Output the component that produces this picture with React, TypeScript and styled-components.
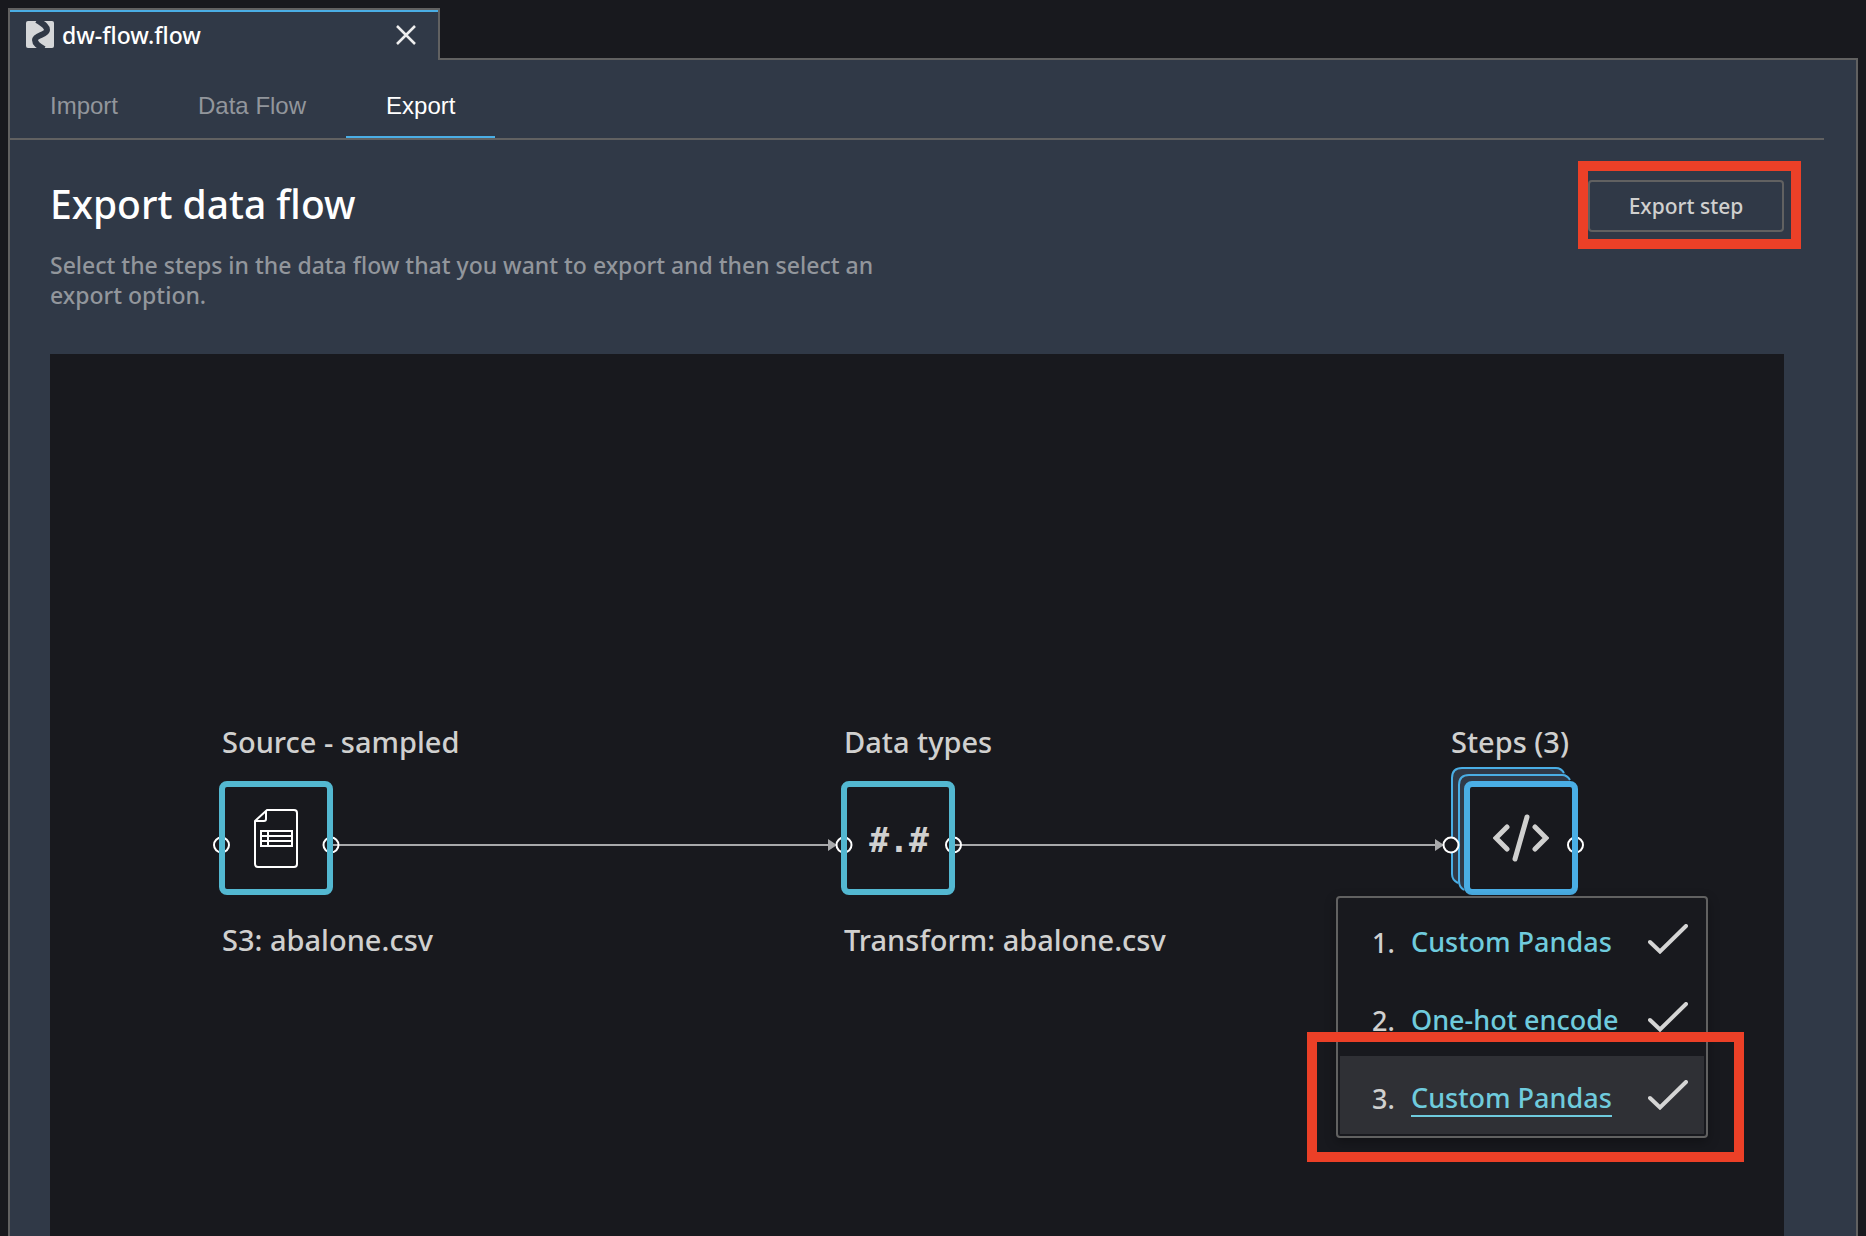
import React from "react";
import styled, { createGlobalStyle } from "styled-components";

const sans = `"Noto Sans", "Open Sans", sans-serif`;

const GlobalStyle = createGlobalStyle`
  * { box-sizing: border-box; }
  body { margin: 0; background: #18191e; font-family: ${sans}; font-weight: 500; color: #d0d0cf; }
  button { font: inherit; color: inherit; background: none; border: 0; padding: 0; cursor: pointer; }
  h1, p, ol { margin: 0; padding: 0; }
`;

const Page = styled.div`
  min-height: 100vh;
  display: flex;
  flex-direction: column;
  padding: 8px 8px 0;
`;

const FileTab = styled.div`
  width: 432px;
  height: 52px;
  margin-bottom: -2px;
  position: relative;
  z-index: 1;
  display: flex;
  align-items: center;
  gap: 8px;
  padding: 4px 22px 4px 16px;
  background: #303947;
  border: 2px solid #616161;
  border-bottom: 0;
  box-shadow: inset 0 2px 0 #4aaee5;
`;

const FileName = styled.span`
  flex: 1;
  font-size: 23px;
  line-height: 32px;
  color: #ffffff;
`;

const CloseButton = styled.button`
  display: flex;
`;

const Panel = styled.main`
  flex: 1;
  display: flex;
  flex-direction: column;
  background: #303947;
  border: 2px solid #616161;
  border-bottom: 0;
`;

const SubTabs = styled.nav`
  display: flex;
  height: 80px;
  margin-right: 32px;
  border-bottom: 2px solid #616161;
`;

const SubTab = styled.button<{ $active?: boolean }>`
  padding: 16px 40px 0;
  border-bottom: 2px solid ${(p) => (p.$active ? "#4aaee5" : "transparent")};
  font: 24px "Liberation Sans", Arial, sans-serif;
  color: ${(p) => (p.$active ? "#ffffff" : "#92969c")};
`;

const Header = styled.header`
  display: flex;
  justify-content: space-between;
  align-items: flex-start;
  padding: 40px 72px 44px 40px;
`;

const Heading = styled.div`
  max-width: 840px;
`;

const Title = styled.h1`
  font-size: 39px;
  line-height: 48px;
  font-weight: 500;
  color: #ffffff;
`;

const Description = styled.p`
  margin-top: 22px;
  font-size: 23px;
  line-height: 30px;
  color: #92969c;
`;

const Anchor = styled.div`
  position: relative;
`;

const ExportButton = styled.button`
  height: 52px;
  width: 196px;
  border: 2px solid #616161;
  border-radius: 4px;
  font-size: 21px;
`;

const Highlight = styled.div<{ $inset: string }>`
  position: absolute;
  inset: ${(p) => p.$inset};
  border: 10px solid #ec4027;
  pointer-events: none;
`;

const Canvas = styled.section`
  position: relative;
  flex: 1;
  min-height: 882px;
  margin: 0 72px 0 40px;
  background: #18191e;
  overflow: hidden;
`;

const Edges = styled.svg`
  position: absolute;
  inset: 0;
`;

const Node = styled.div<{ $x: number }>`
  position: absolute;
  left: ${(p) => p.$x}px;
  top: 367px;
`;

const NodeTitle = styled.div`
  font-size: 29px;
  line-height: 42px;
  white-space: nowrap;
`;

const NodeCaption = styled(NodeTitle)`
  margin-top: 24px;
`;

const NodeBox = styled.button<{ $color: string; $shift?: number }>`
  display: flex;
  align-items: center;
  justify-content: center;
  width: 114px;
  height: 114px;
  margin: 18px 0 0 ${(p) => p.$shift ?? -3}px;
  border: 6px solid ${(p) => p.$color};
  border-radius: 8px;
`;

const TypeGlyph = styled.span`
  padding: 4px 0 0 2px;
  font: bold 33px "DejaVu Sans Mono", monospace;
`;

const Menu = styled.div`
  position: absolute;
  left: 1286px;
  top: 542px;
  width: 372px;
  padding: 2px;
  border: 2px solid #616161;
  border-radius: 4px;
  background: #18191e;
  box-shadow: 0 4px 12px rgba(0, 0, 0, 0.3);
`;

const MenuList = styled.ol`
  list-style: none;
`;

const MenuItem = styled.li<{ $active?: boolean }>`
  display: flex;
  align-items: center;
  height: 78px;
  padding: 8px 16px 0 32px;
  font-size: 27px;
  line-height: 34px;
  background: ${(p) => (p.$active ? "#2f3035" : "transparent")};
`;

const MenuNumber = styled.span`
  width: 39px;
`;

const MenuLink = styled.a<{ $active?: boolean }>`
  color: #6fcbdd;
  text-decoration: none;
  border-bottom: 2px solid ${(p) => (p.$active ? "#6fcbdd" : "transparent")};
`;

const MenuCheck = styled.svg`
  margin: 0 0 8px auto;
`;

const FlowLogo = () => (
  <svg width="28" height="28" viewBox="0 0 28 28" aria-hidden="true">
    <rect width="28" height="27" rx="2" fill="#d5d7d9" />
    <path
      d="M11 -1C17 3 21 5 21 9C21 14 9 14 9 19C9 23 13 25 18 28"
      fill="none"
      stroke="#303947"
      strokeWidth="6"
    />
  </svg>
);

const FileIcon = () => (
  <svg width="44" height="60" viewBox="0 0 44 60" fill="none" stroke="#ffffff" strokeWidth="2" aria-hidden="true">
    <path d="M13 2H40Q43 2 43 5V56Q43 59 40 59H4Q1 59 1 56V13Z" strokeLinejoin="round" />
    <path d="M12 3V11Q12 13 10 13H2" />
    <path d="M7 23H38V38H7ZM7 28H38M7 33H38M14 23V38" />
  </svg>
);

const CodeIcon = () => (
  <svg width="56" height="48" viewBox="0 0 56 48" fill="none" stroke="#d0d0cf" strokeWidth="5" strokeLinecap="round" aria-hidden="true">
    <path d="M14 13L3 24L14 35M42 13L53 24L42 35" />
    <path d="M34 3L22 45" />
  </svg>
);

const steps = [
  { name: "Custom Pandas", active: false },
  { name: "One-hot encode", active: false },
  { name: "Custom Pandas", active: true },
];

export default function App() {
  return (
    <>
      <GlobalStyle />
      <Page>
        <FileTab>
          <FlowLogo />
          <FileName>dw-flow.flow</FileName>
          <CloseButton aria-label="Close tab">
            <svg width="20" height="20" viewBox="0 0 20 20" stroke="#eeeeee" strokeWidth="2.5">
              <path d="M1 1L19 19M19 1L1 19" />
            </svg>
          </CloseButton>
        </FileTab>
        <Panel>
          <SubTabs>
            <SubTab>Import</SubTab>
            <SubTab>Data Flow</SubTab>
            <SubTab $active>Export</SubTab>
          </SubTabs>
          <Header>
            <Heading>
              <Title>Export data flow</Title>
              <Description>
                Select the steps in the data flow that you want to export and then select an export option.
              </Description>
            </Heading>
            <Anchor>
              <ExportButton>Export step</ExportButton>
              <Highlight $inset="-19px -17px -17px -10px" />
            </Anchor>
          </Header>
          <Canvas>
            <Edges width="1734" height="882" fill="none" stroke="#ffffff" strokeWidth="2">
              <path d="M1402 522V424Q1402 414 1412 414H1508L1516 420V530H1408Z" fill="#303947" stroke="none" />
              <path d="M1408 529Q1402 526 1402 520V424Q1402 414 1412 414H1506Q1511 414 1514 419" stroke="#4aaee5" />
              <path d="M1409 530V431Q1409 421 1419 421H1515L1523 430V537H1414Z" fill="#303947" stroke="none" />
              <path d="M1414 536Q1409 533 1409 527V431Q1409 421 1419 421H1512Q1517 421 1520 426" stroke="#4aaee5" />
              <rect x="1416" y="429" width="110" height="110" rx="6" fill="#18191e" stroke="none" />
              <g stroke="#a8a9ab">
                <path d="M281 491H780M903 491H1388" />
                <path d="M778 485V497L787 491ZM1385 485V497L1394 491Z" fill="#a8a9ab" stroke="none" />
              </g>
              <circle cx="171.5" cy="491" r="7.5" />
              <circle cx="281" cy="491" r="7.5" />
              <circle cx="794" cy="491" r="7.5" />
              <circle cx="903.5" cy="491" r="7.5" />
              <circle cx="1401" cy="491" r="7.5" fill="#18191e" />
              <circle cx="1525.5" cy="491" r="7.5" />
            </Edges>
            <Node $x={172}>
              <NodeTitle>Source - sampled</NodeTitle>
              <NodeBox $color="#53b8d1" aria-label="Source">
                <FileIcon />
              </NodeBox>
              <NodeCaption>S3: abalone.csv</NodeCaption>
            </Node>
            <Node $x={794}>
              <NodeTitle>Data types</NodeTitle>
              <NodeBox $color="#53b8d1">
                <TypeGlyph>#.#</TypeGlyph>
              </NodeBox>
              <NodeCaption>Transform: abalone.csv</NodeCaption>
            </Node>
            <Node $x={1401}>
              <NodeTitle>Steps (3)</NodeTitle>
              <NodeBox $color="#4aaee5" $shift={13} aria-label="Steps">
                <CodeIcon />
              </NodeBox>
            </Node>
            <Menu>
              <MenuList>
                {steps.map((step, i) => (
                  <MenuItem key={i} $active={step.active}>
                    <MenuNumber>{i + 1}.</MenuNumber>
                    <MenuLink href="#" $active={step.active}>
                      {step.name}
                    </MenuLink>
                    <MenuCheck width="40" height="30" viewBox="0 0 40 30" fill="none" stroke="#d5d5d5" strokeWidth="4" strokeLinecap="round" aria-hidden="true">
                      <path d="M2 18L12 27.5L38 2" />
                    </MenuCheck>
                  </MenuItem>
                ))}
              </MenuList>
              <Highlight $inset="134px -38px -26px -31px" />
            </Menu>
          </Canvas>
        </Panel>
      </Page>
    </>
  );
}
